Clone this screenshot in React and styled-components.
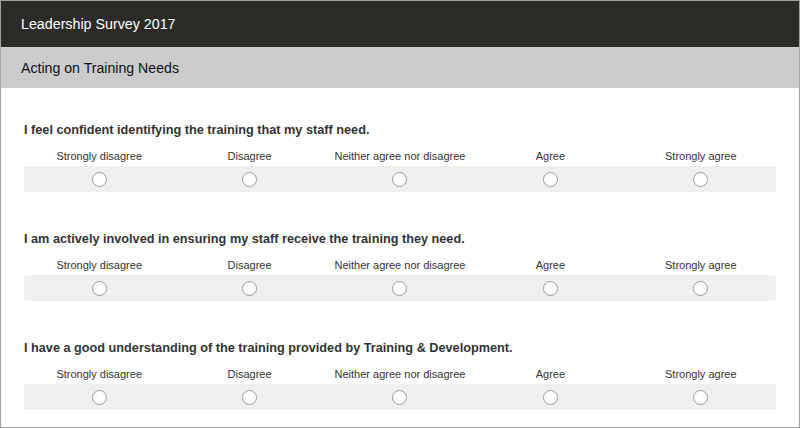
import React from "react";
import styled, { createGlobalStyle } from "styled-components";

const GlobalStyle = createGlobalStyle`
  html, body { margin: 0; padding: 0; background: #ffffff; }
  body { font-family: "Liberation Sans", Arial, sans-serif; }
  * { box-sizing: border-box; }
`;

const Frame = styled.div`
  width: 800px;
  height: 428px;
  border: 1px solid #a3a3a3;
  overflow: hidden;
  background: #ffffff;
  display: flex;
  flex-direction: column;
`;

const TopBar = styled.header`
  height: 46px;
  background: #2c2b27;
  color: #ffffff;
  display: flex;
  align-items: center;
  padding: 0 20px;
  font-size: 14.25px;
`;

const SectionBar = styled.div`
  height: 41px;
  background: #cccccc;
  color: #111111;
  display: flex;
  align-items: center;
  padding: 0 20px;
  font-size: 14.15px;
`;

const Content = styled.main`
  padding: 34px 23px 17px;
  display: flex;
  flex-direction: column;
  gap: 39px;
`;

const Question = styled.section`
  display: flex;
  flex-direction: column;
`;

const Title = styled.h2`
  margin: 0 0 11px;
  font-size: 12.7px;
  line-height: 16px;
  font-weight: bold;
  color: #333333;
`;

const Scale = styled.div`
  display: grid;
  grid-template-columns: repeat(5, 1fr);
`;

const Labels = styled(Scale)`
  height: 14px;
  margin-bottom: 3px;
`;

const Label = styled.div`
  text-align: center;
  font-size: 11px;
  line-height: 14px;
  color: #333333;
`;

const RadioRow = styled(Scale)`
  height: 26px;
  background: #efefee;
  border-radius: 3px;
`;

const Cell = styled.label`
  display: flex;
  align-items: center;
  justify-content: center;
`;

const Radio = styled.input.attrs({ type: "radio" })`
  appearance: none;
  -webkit-appearance: none;
  margin: 0;
  width: 15px;
  height: 15px;
  border-radius: 50%;
  border: 1px solid #9b9b9b;
  background: #ffffff;
`;

const options = [
  "Strongly disagree",
  "Disagree",
  "Neither agree nor disagree",
  "Agree",
  "Strongly agree",
];

const questions = [
  "I feel confident identifying the training that my staff need.",
  "I am actively involved in ensuring my staff receive the training they need.",
  "I have a good understanding of the training provided by Training & Development.",
];

export default function App() {
  return (
    <>
      <GlobalStyle />
      <Frame>
        <TopBar>Leadership Survey 2017</TopBar>
        <SectionBar>Acting on Training Needs</SectionBar>
        <Content>
          {questions.map((q, qi) => (
            <Question key={qi}>
              <Title>{q}</Title>
              <Labels>
                {options.map((o) => (
                  <Label key={o}>{o}</Label>
                ))}
              </Labels>
              <RadioRow>
                {options.map((o) => (
                  <Cell key={o}>
                    <Radio name={`q${qi}`} aria-label={o} />
                  </Cell>
                ))}
              </RadioRow>
            </Question>
          ))}
        </Content>
      </Frame>
    </>
  );
}
